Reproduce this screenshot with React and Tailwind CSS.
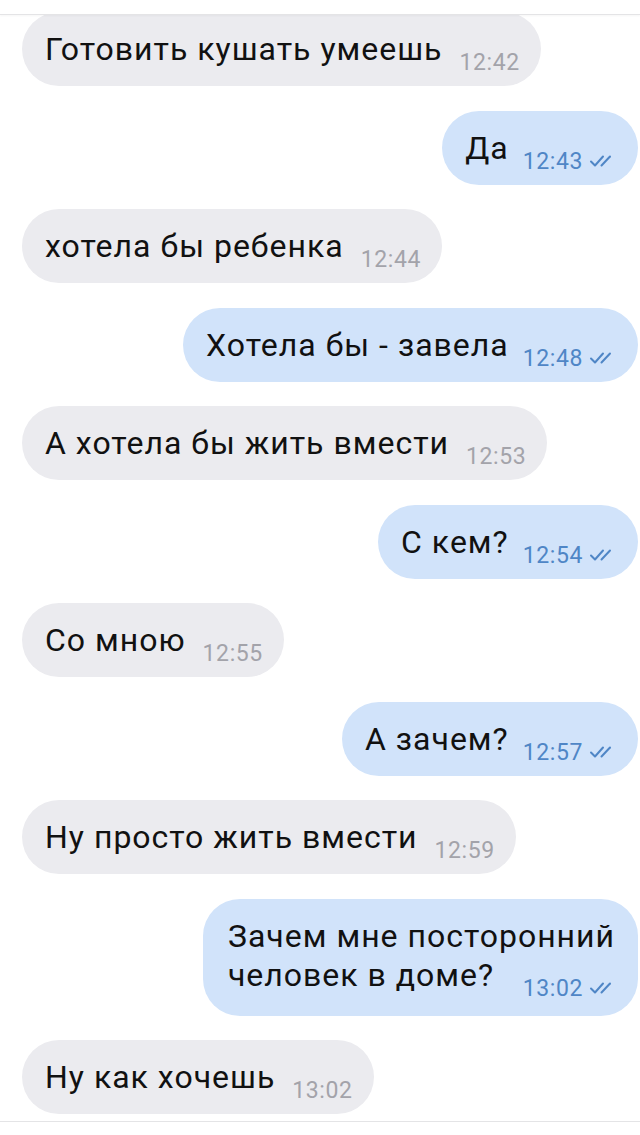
import React from "react";

const messages = [
  { out: false, text: "Готовить кушать умеешь", time: "12:42" },
  { out: true, text: "Да", time: "12:43" },
  { out: false, text: "хотела бы ребенка", time: "12:44" },
  { out: true, text: "Хотела бы - завела", time: "12:48" },
  { out: false, text: "А хотела бы жить вмести", time: "12:53" },
  { out: true, text: "С кем?", time: "12:54" },
  { out: false, text: "Со мною", time: "12:55" },
  { out: true, text: "А зачем?", time: "12:57" },
  { out: false, text: "Ну просто жить вмести", time: "12:59" },
  { out: true, text: "Зачем мне посторонний\nчеловек в доме?", time: "13:02", multi: true },
  { out: false, text: "Ну как хочешь", time: "13:02" },
];

function Check() {
  return (
    <svg width="24" height="14" viewBox="0 0 24 14" fill="none" className="shrink-0">
      <path d="M2 7.5 L6 11.5 L14 2.5" stroke="#4f86c6" strokeWidth="2" strokeLinecap="round" strokeLinejoin="round" />
      <path d="M12.5 11.5 L21 2.5" stroke="#4f86c6" strokeWidth="2" strokeLinecap="round" />
    </svg>
  );
}

function Bubble({ m, first }) {
  const lines = m.text.split("\n");
  const last = lines.length - 1;
  return (
    <div className={`flex ${m.out ? "justify-end pr-[2px]" : "justify-start pl-[22px]"} ${first ? "mt-[-3px]" : ""}`}>
      <div
        className={`flex flex-col rounded-[37px] pt-[17px] ${m.multi ? "pb-[21px] pl-[25px]" : "pb-[17px] pl-[23px]"} ${
          m.out ? "bg-[#d1e3fa] pr-[23px]" : "bg-[#ebebef] pr-[21px]"
        } text-[32px] leading-[40px] tracking-[1px] text-[#111111] whitespace-nowrap`}
      >
        {lines.map((l, i) =>
          i < last ? (
            <div key={i}>{l}</div>
          ) : (
            <div key={i} className={`flex items-end justify-between ${i > 0 ? "mt-[-1px]" : ""}`}>
              <span>{l}</span>
              <div className={`flex items-center mb-[-5px] ${m.out ? "ml-[14px] gap-[6px] pr-[2px]" : "ml-[17px]"}`}>
                <span className={`text-[23px] leading-[23px] tracking-[0.6px] ${m.out ? "text-[#4f86c6]" : "text-[#a3a3aa]"}`}>
                  {m.time}
                </span>
                {m.out && <Check />}
              </div>
            </div>
          )
        )}
      </div>
    </div>
  );
}

export default function App() {
  return (
    <div className="w-[640px] h-[1135px] bg-white overflow-hidden flex flex-col" style={{ fontFamily: "Roboto, 'Noto Sans', sans-serif" }}>
      <div className="relative z-10 h-[15px] shrink-0 bg-white border-b border-[#e4e4e6] shadow-[0_1px_2px_rgba(0,0,0,0.04)]" />
      <div className="flex flex-col gap-[24.5px] overflow-hidden h-[1106px]">
        {messages.map((m, i) => (
          <Bubble key={i} m={m} first={i === 0} />
        ))}
      </div>
      <div className="flex-1 bg-white border-t border-[#e4e4e6]" />
    </div>
  );
}
